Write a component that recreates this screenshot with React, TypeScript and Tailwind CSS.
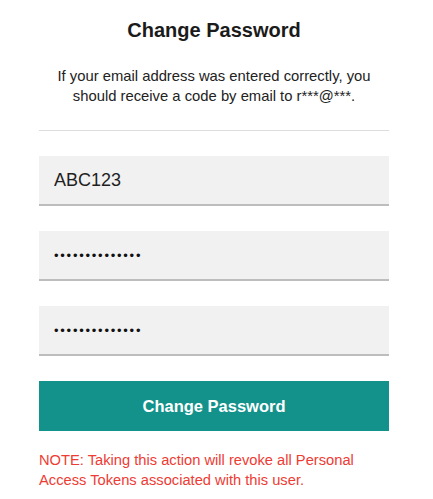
export default function App() {
  return (
    <div className="min-h-screen w-full bg-white font-['Liberation_Sans',Arial,sans-serif]">
      <form className="ml-[39px] flex w-[350px] flex-col pt-4" onSubmit={(e) => e.preventDefault()}>
        <h1 className="text-center text-[20px] font-bold leading-[28px] text-[#1b1b1b]">Change Password</h1>
        <p className="mt-[22px] text-center text-[14.8px] leading-[20px] text-[#222]">
          If your email address was entered correctly, you
          <br />
          should receive a code by email to r***@***.
        </p>
        <div className="mt-6 h-px w-full bg-[#dddddd]" />

        <input
          type="text"
          readOnly
          value="ABC123"
          className="mt-[25px] h-[50px] w-full border-b-2 border-[#bdbdbd] bg-[#f1f1f1] px-[15px] text-[18px] text-[#1f1f1f] outline-none"
        />
        <input
          type="password"
          readOnly
          value="abcdefghijklmn"
          className="mt-[25px] h-[50px] w-full border-b-2 border-[#bdbdbd] bg-[#f1f1f1] px-[15px] text-[13px] tracking-[1.75px] text-[#111] outline-none"
        />
        <input
          type="password"
          readOnly
          value="abcdefghijklmn"
          className="mt-[25px] h-[50px] w-full border-b-2 border-[#bdbdbd] bg-[#f1f1f1] px-[15px] text-[13px] tracking-[1.75px] text-[#111] outline-none"
        />

        <button
          type="submit"
          className="mt-[25px] h-[50px] w-full bg-[#12928b] text-[16.5px] font-bold text-white"
        >
          Change Password
        </button>

        <p className="mt-[19px] text-[14.7px] leading-[20px] text-[#ee3b33]">
          NOTE: Taking this action will revoke all Personal
          <br />
          Access Tokens associated with this user.
        </p>
      </form>
    </div>
  );
}
